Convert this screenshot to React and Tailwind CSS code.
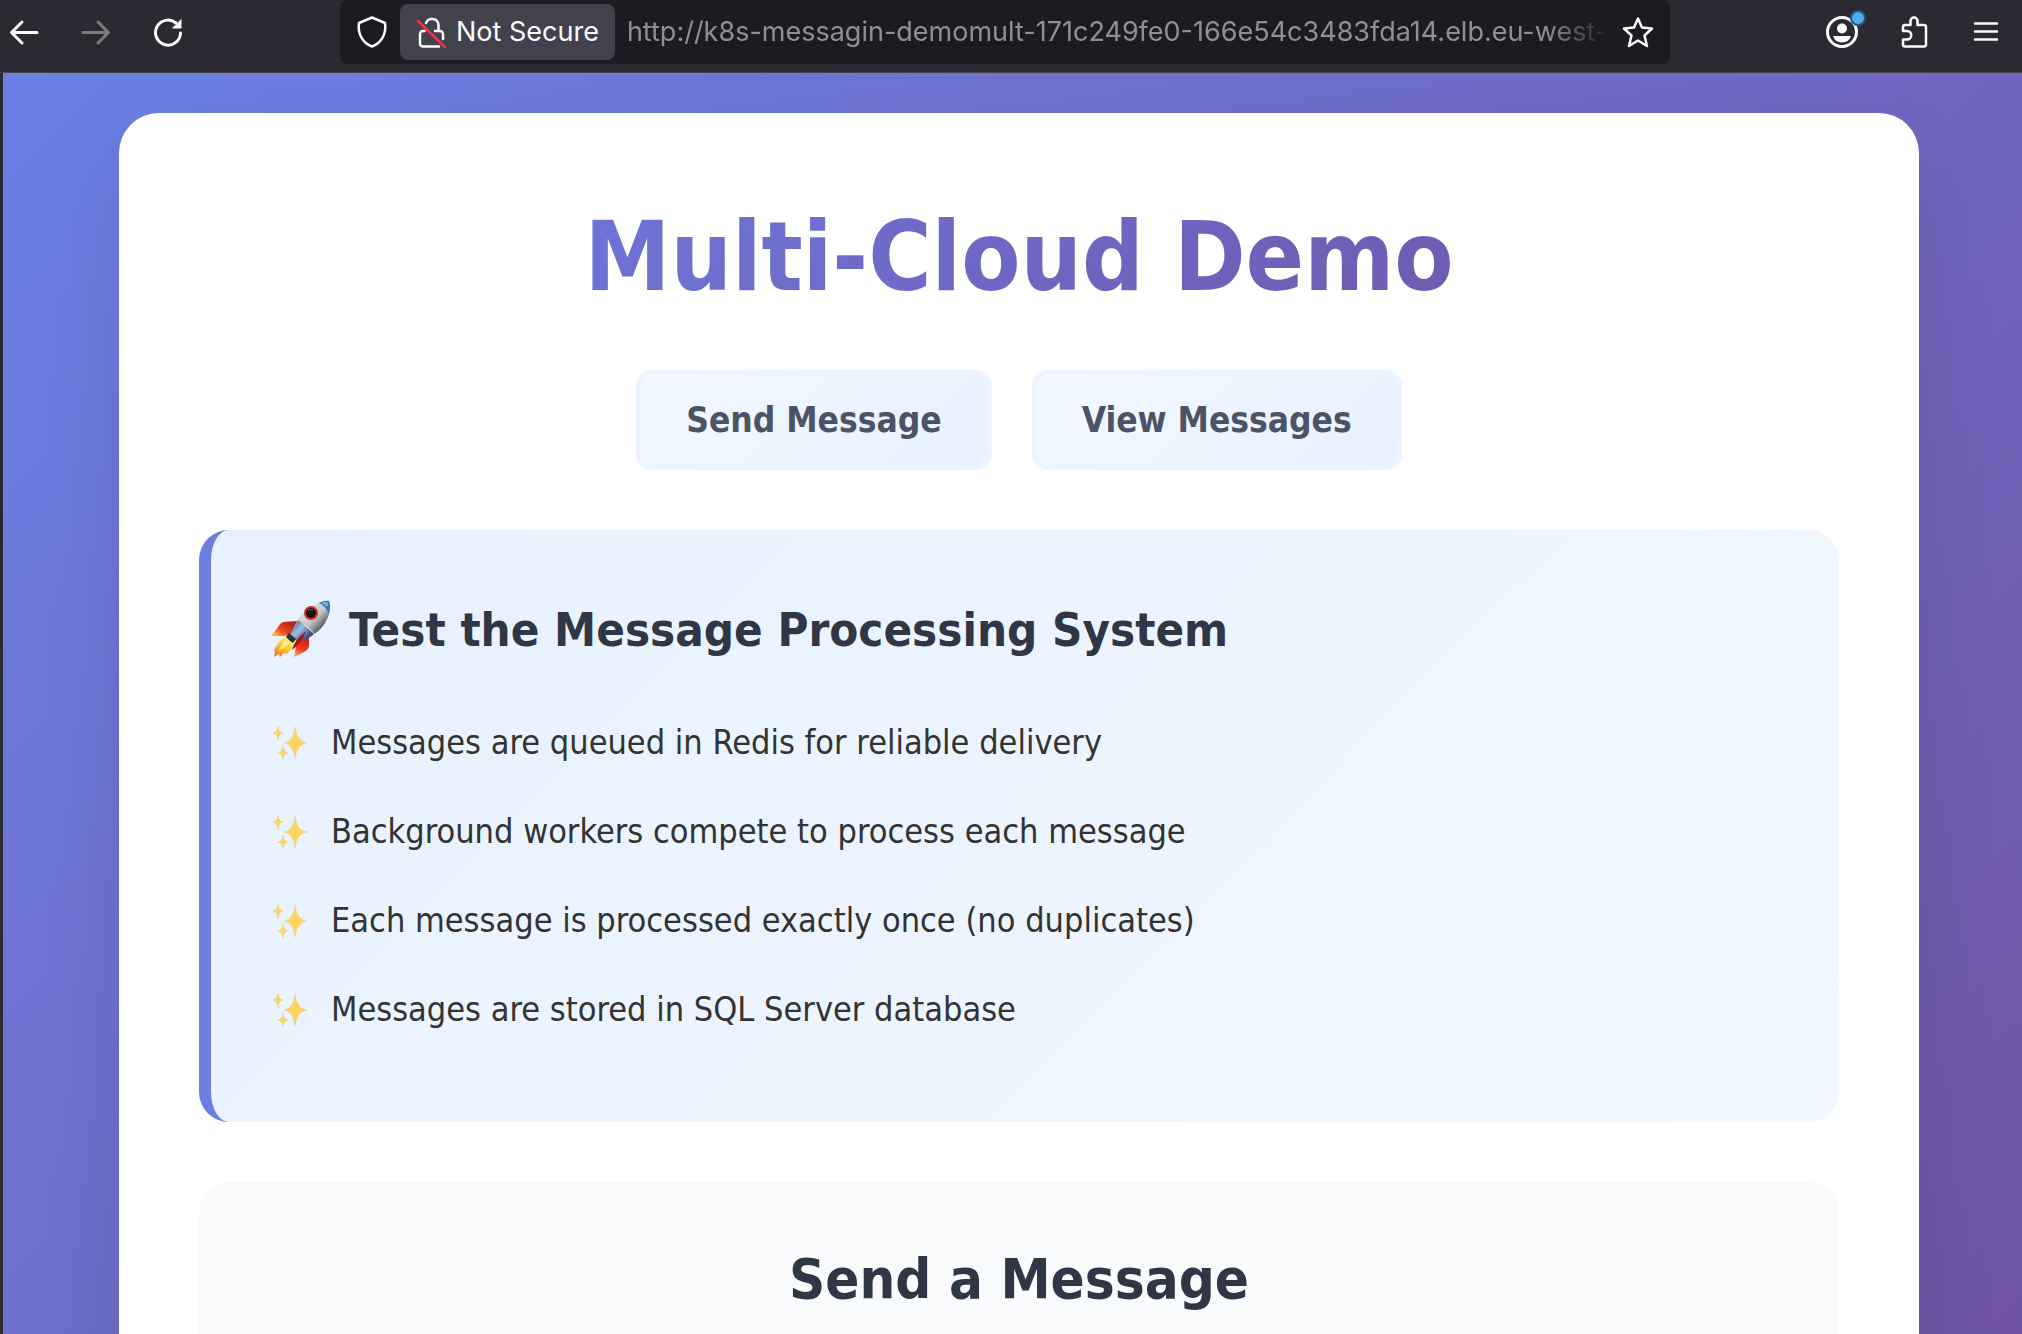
const items = [
  'Messages are queued in Redis for reliable delivery',
  'Background workers compete to process each message',
  'Each message is processed exactly once (no duplicates)',
  'Messages are stored in SQL Server database',
];

const line = { fill: 'none', stroke: 'currentColor', strokeLinecap: 'round', strokeLinejoin: 'round' };

function Rocket() {
  return (
    <svg viewBox="0 0 60 60" className="h-[60px] w-[60px] shrink-0" aria-hidden="true">
      <defs>
        <linearGradient id="hull" x1="26" y1="10" x2="48" y2="32" gradientUnits="userSpaceOnUse">
          <stop offset="0" stopColor="#6f9bd6" />
          <stop offset="0.3" stopColor="#d9dcdf" />
          <stop offset="0.6" stopColor="#c3c5c3" />
          <stop offset="1" stopColor="#4c5258" />
        </linearGradient>
        <linearGradient id="band" x1="20" y1="24" x2="36" y2="40" gradientUnits="userSpaceOnUse">
          <stop offset="0" stopColor="#3f6cb4" />
          <stop offset="0.45" stopColor="#9dbfe6" />
          <stop offset="1" stopColor="#22427c" />
        </linearGradient>
        <linearGradient id="fin" x1="20" y1="22" x2="8" y2="38" gradientUnits="userSpaceOnUse">
          <stop offset="0" stopColor="#b91f14" />
          <stop offset="0.6" stopColor="#ee4423" />
          <stop offset="1" stopColor="#ffb54a" />
        </linearGradient>
        <linearGradient id="fin2" x1="36" y1="38" x2="26" y2="56" gradientUnits="userSpaceOnUse">
          <stop offset="0" stopColor="#c52017" />
          <stop offset="0.65" stopColor="#ee4024" />
          <stop offset="1" stopColor="#ffa24a" />
        </linearGradient>
        <linearGradient id="flame" x1="18" y1="38" x2="6" y2="56" gradientUnits="userSpaceOnUse">
          <stop offset="0" stopColor="#fff27a" />
          <stop offset="0.5" stopColor="#fcc62c" />
          <stop offset="1" stopColor="#f07a24" />
        </linearGradient>
      </defs>
      <path d="M26 21 L12 22 Q9 23 7 27 L0 36 L14 36 L20 34 Z" fill="url(#fin)" />
      <path d="M38 37 L38 46 Q37 50 33 52 L23 57 L25 46 L30 38 Z" fill="url(#fin2)" />
      <path d="M17 36 Q10 38 6 45 Q2 50 4 52 L3 57 L8 54 L9 57 L13 53 L16 54 Q19 50 24 47 L25 41 Z" fill="url(#flame)" />
      <path d="M14 41 Q9 46 8 51 Q14 48 19 43 Z" fill="#fff6a0" opacity="0.7" />
      <path d="M20 33 L27 20 Q34 25 43 34 Q36 40 28 41 L22 40 Z" fill="url(#band)" />
      <path d="M27 20 Q34 9 45 4 Q53 0 58 1 Q60 8 57 17 Q52 29 43 34 Q38 25 27 20 Z" fill="url(#hull)" />
      <path d="M48 3 Q54 0 58 1 Q60 5 58 14 Q55 6 48 3 Z" fill="#3672b8" />
      <path d="M50 3 Q55 1 57 3 Q57 5 56 7 Q54 4 50 3 Z" fill="#7fb4e6" />
      <path d="M27 20 Q38 25 43 34" fill="none" stroke="#d9b765" strokeWidth="1" />
      <circle cx="40" cy="13" r="7" fill="#d42a2a" />
      <circle cx="40" cy="13" r="5" fill="#141414" />
      <path d="M37 11 Q39 8 42 10" fill="none" stroke="#6c6c6c" strokeWidth="1" />
      <path d="M18 33 L25 39 L22 43 L19 41 L15 37 Z" fill="#26323e" />
      <path d="M35 31 Q24 39 21 50 Q31 43 35 31 Z" fill="#a51717" />
    </svg>
  );
}

function Sparkles() {
  return (
    <svg viewBox="0 0 36 36" className="h-9 w-9 shrink-0" aria-hidden="true">
      <g fill="#fbd55f" stroke="#f3c58a" strokeWidth="0.5">
        <path d="M24 2 Q25.500 16.500 36 18 Q25.500 19.500 24 34 Q22.500 19.500 13 18 Q22.500 16.500 24 2 Z" />
        <path d="M7 1 Q7.500 7.500 12 8 Q7.500 8.500 7 16 Q6.500 8.500 2 8 Q6.500 7.500 7 1 Z" />
        <path d="M12 21 Q12.500 27.500 17 28 Q12.500 28.500 12 35 Q11.500 28.500 7 28 Q11.500 27.500 12 21 Z" />
      </g>
    </svg>
  );
}

function Toolbar() {
  return (
    <header className="flex h-[73px] shrink-0 items-start justify-between border-b border-[#45443f] bg-[#2b2a33] font-['Inter',sans-serif] text-[#fbfbfe]">
      <div className="flex h-16 items-center gap-10 pl-2">
        <button aria-label="Back" className="h-8 w-8">
          <svg viewBox="0 0 32 32" {...line} strokeWidth="3"><path d="M29 16.500H3.500M14 6 3.500 16.500 14 27" /></svg>
        </button>
        <button aria-label="Forward" className="h-8 w-8 text-[#7b7a80]">
          <svg viewBox="0 0 32 32" {...line} strokeWidth="3"><path d="M3 16.500H28.500M18 6 28.500 16.500 18 27" /></svg>
        </button>
        <button aria-label="Reload" className="h-8 w-8">
          <svg viewBox="0 0 32 32" {...line} strokeWidth="3">
            <path d="M28.500 17A12.500 12.500 0 1 1 24 7" />
            <path d="M29 4V12H21Z" fill="currentColor" strokeWidth="1" />
          </svg>
        </button>
      </div>
      <div className="mx-39 flex h-16 min-w-0 flex-1 items-center rounded-lg bg-[#1c1b22] px-4">
        <button aria-label="Tracking protection" className="mr-3 h-8 w-8 shrink-0">
          <svg viewBox="0 0 32 32" {...line} strokeWidth="2.500"><path d="M16 1.500 29 7C30.500 17 26 27 16 30.500 6 27 1.500 17 3 7Z" /></svg>
        </button>
        <button className="flex h-14 shrink-0 items-center gap-2 rounded-lg bg-[#42414d] px-4 text-[27px]">
          <svg viewBox="0 0 32 32" className="h-8 w-8" {...line} strokeWidth="2.500" aria-hidden="true">
            <path d="M10 7a6.500 6.500 0 0 1 12.500 2v6M8.500 15H7a3 3 0 0 0-3 3v9.500a3 3 0 0 0 3 3H23M19 15h5a3 3 0 0 1 3 3v5" />
            <path d="M2 5 29 31" stroke="#f0334b" />
          </svg>
          Not Secure
        </button>
        <input
          aria-label="Address"
          readOnly
          value="http://k8s-messagin-demomult-171c249fe0-166e54c3483fda14.elb.eu-west-1.amazonaws.com"
          className="mx-3 min-w-0 flex-1 bg-transparent text-[27px] text-[#8f8f94] outline-none [mask-image:linear-gradient(to_right,black_calc(100%-64px),transparent)]"
        />
        <button aria-label="Bookmark" className="h-8 w-8 shrink-0">
          <svg viewBox="0 0 32 32" {...line} strokeWidth="2.500"><path d="M16 2.500 20 11.500 30 12.500 22.500 19.500 25 30 16 24.500 7 30 9.500 19.500 2 12.500 12 11.500Z" /></svg>
        </button>
      </div>
      <div className="flex h-16 items-center gap-10 pr-5">
        <button aria-label="Account" className="relative h-8 w-8">
          <svg viewBox="0 0 32 32" fill="none">
            <circle cx="16" cy="16" r="14.500" stroke="currentColor" strokeWidth="3" />
            <circle cx="16" cy="12.500" r="5" fill="currentColor" />
            <path d="M7 20H25Q23 26.500 16 26.500T7 20Z" fill="currentColor" />
          </svg>
          <span className="absolute -top-1.5 -right-2 h-4 w-4 rounded-full border-2 border-[#2d526e] bg-[#4caff5]" />
        </button>
        <button aria-label="Extensions" className="h-8 w-8">
          <svg viewBox="0 0 32 32" {...line} strokeWidth="2.500"><path d="M5 23.500V28.500a2 2 0 0 0 2 2H26a2 2 0 0 0 2-2V11a2 2 0 0 0-2-2H19.500V5a3.500 3.500 0 0 0-7 0v4H7a2 2 0 0 0-2 2v4H9a4.250 4.250 0 0 1 0 8.500Z" /></svg>
        </button>
        <button aria-label="Menu" className="h-8 w-8">
          <svg viewBox="0 0 32 32" {...line} strokeWidth="2.500"><path d="M5 7.500H27M5 15.500H27M5 23.500H27" /></svg>
        </button>
      </div>
    </header>
  );
}

const navButton =
  'flex h-[100px] items-center rounded-2xl border-4 border-[#ebf4ff] bg-linear-135 from-[#f2f8ff] to-[#e7f2fe] px-[46px] text-[35px] font-bold text-[#4b5366]';

export default function App() {
  return (
    <div className="flex h-screen flex-col overflow-hidden bg-[#2b2a33]">
      <Toolbar />
      <div className="ml-[3px] min-h-0 flex-1 bg-linear-135 from-[#6a80e5] to-[#6f54a6] pl-29 pr-[103px] pt-10 font-['DejaVu_Sans_Condensed','DejaVu_Sans',sans-serif]">
        <main className="rounded-t-[40px] bg-white p-20 shadow-[0_40px_80px_rgba(0,0,0,0.1)]">
          <h1 className="mb-[49px] text-center text-[96px] leading-[128px] font-bold">
            <span className="block bg-linear-135 from-[#6a80e5] to-[#6f4fa2] bg-clip-text text-transparent">Multi-Cloud Demo</span>
          </h1>
          <nav className="mb-15 flex justify-center gap-10">
            <button className={navButton}>Send Message</button>
            <button className={navButton}>View Messages</button>
          </nav>
          <section className="mb-15 rounded-[30px] border-l-12 border-[#6a7fe1] bg-linear-135 from-[#e7f2fe] to-[#f1f8ff] px-15 pt-15 pb-17">
            <h2 className="flex h-20 items-center gap-[18px] text-[47px] font-bold text-[#2f3747]">
              <Rocket />
              Test the Message Processing System
            </h2>
            <ul className="mt-7 text-[34px] text-[#333333]">
              {items.map((text) => (
                <li key={text} className="flex h-[89px] items-center gap-6">
                  <Sparkles />
                  {text}
                </li>
              ))}
            </ul>
          </section>
          <section className="rounded-[30px] bg-[#f8fafc] px-15 pt-15 pb-80">
            <h2 className="text-center text-[56px] leading-[74px] font-bold text-[#2f3747]">Send a Message</h2>
          </section>
        </main>
      </div>
    </div>
  );
}
